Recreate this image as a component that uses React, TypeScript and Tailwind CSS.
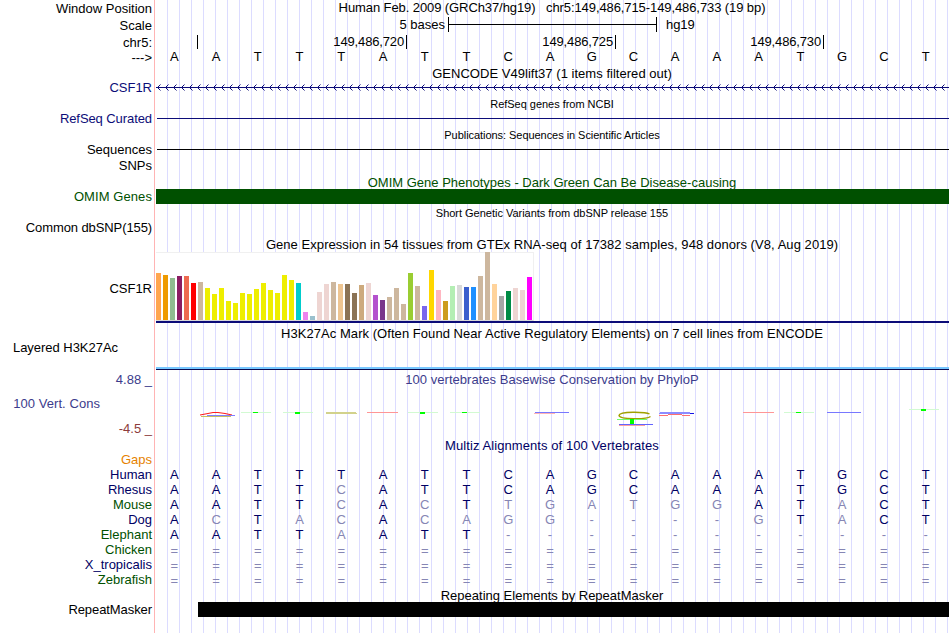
import type { ReactNode } from 'react';

const SEQ = 'AATTTATTCAGCAAATGCT';

// upper case = matches human, lower case = mismatch (drawn faded)
const ALIGNMENTS = [
  { name: 'Human', seq: 'AATTTATTCAGCAAATGCT', green: false },
  { name: 'Rhesus', seq: 'AATTcATTCAGCAAATGCT', green: false },
  { name: 'Mouse', seq: 'AATTcAcTtgatggATaCT', green: true },
  { name: 'Dog', seq: 'AcTacAcagg----gTaCT', green: false },
  { name: 'Elephant', seq: 'AATTaATT-----------', green: true },
  { name: 'Chicken', seq: '===================', green: true },
  { name: 'X_tropicalis', seq: '===================', green: false },
  { name: 'Zebrafish', seq: '===================', green: true },
];

const TISSUES: [number, string][] = [
  [47, '#ffa54f'], [45, '#ee9a00'], [42, '#8fbc8f'], [44, '#8b1c62'], [44, '#ee6a50'], [37, '#ff0000'],
  [38, '#cdb79e'], [32, '#eeee00'], [26, '#eeee00'], [32, '#eeee00'], [19, '#eeee00'], [17, '#eeee00'],
  [27, '#eeee00'], [26, '#eeee00'], [31, '#eeee00'], [37, '#eeee00'], [30, '#eeee00'], [27, '#eeee00'],
  [45, '#eeee00'], [40, '#eeee00'], [37, '#00cdcd'], [8, '#ee82ee'], [4, '#9ac0cd'], [28, '#eed5d2'],
  [36, '#eed5d2'], [38, '#cdb79e'], [36, '#eec591'], [36, '#8b7355'], [27, '#8b7355'], [35, '#cdaa7d'],
  [37, '#eed5d2'], [25, '#b452cd'], [20, '#7a378b'], [23, '#cdb79e'], [32, '#cdb79e'], [16, '#cdb79e'],
  [47, '#9acd32'], [34, '#cdb79e'], [14, '#7a67ee'], [50, '#ffd700'], [30, '#ffb6c1'], [19, '#cd9b1d'],
  [34, '#b4eeb4'], [35, '#d9d9d9'], [33, '#3a5fcd'], [33, '#1e90ff'], [44, '#cdb79e'], [68, '#cdb79e'],
  [36, '#ffd39b'], [24, '#a6a6a6'], [29, '#008b45'], [32, '#eed5d2'], [30, '#eed5d2'], [43, '#ff00ff'],
];

const ARROWS = Array.from({ length: 99 }, (_, i) => `M${4.5 + i * 8} 0.5l-3 3l3 3`).join('');

type RowProps = {
  height: string;
  label?: string;
  labelClass?: string;
  children?: ReactNode;
};

function Row({ height, label, labelClass = '', children }: RowProps) {
  return (
    <div className={`flex shrink-0 ${height}`}>
      <div className={`w-[152px] shrink-0 text-right whitespace-pre ${labelClass}`}>{label}</div>
      <div className="w-[4px] shrink-0" />
      <div className="w-[793px] shrink-0">{children}</div>
    </div>
  );
}

function Title({ children, className = '' }: { children: ReactNode; className?: string }) {
  return <div className={`pr-px text-center whitespace-pre ${className}`}>{children}</div>;
}

function Bases({ seq, className = '' }: { seq: string; className?: string }) {
  return (
    <div className={`-ml-[2.5px] grid w-[793px] grid-cols-19 text-center ${className}`}>
      {seq.split('').map((c, i) => (
        <span key={i} className={/[A-Z]/.test(c) ? '' : 'text-[#8686b4]'}>
          {c.toUpperCase()}
        </span>
      ))}
    </div>
  );
}

function Tick({ label, width }: { label?: string; width: string }) {
  return (
    <div className={`flex h-[14px] shrink-0 justify-end border-r border-black ${width}`}>
      {label && <span className="mr-[2px] leading-[14px] tracking-[-0.15px]">{label}</span>}
    </div>
  );
}

function Expression() {
  return (
    <div className="h-[71px]">
      <div className="flex h-[69px] w-[378px] items-end gap-[2px] border-t border-r border-b border-t-[#f0f0f0] border-r-[#f0f0f0] border-b-[#d8d8d8] bg-white">
        {TISSUES.map(([h, color], i) => (
          <div key={i} className="-mt-px w-[5px] shrink-0" style={{ height: h, backgroundColor: color }} />
        ))}
      </div>
      <div className="h-[2px] bg-[#0c0c78]" />
    </div>
  );
}

function Conservation() {
  return (
    <svg width="793" height="20" viewBox="156 408 793 20" fill="none">
      <path d="M200 415L208 413.5L213 412.5H218L225 413.5L232 415" stroke="#ff2020" strokeWidth="1.2" />
      <path d="M207 415.5H235" stroke="#8080ff" />
      <path d="M201 416.5H231" stroke="#c8c060" />
      <path d="M241 412.5H271M283 412.5H313M408 412.5H438M450 412.5H480M784 412.5H814M909 409.5H939" stroke="#d2fad2" />
      <path d="M253 412.5H258M462 412.5H467M796 412.5H801" stroke="#00ff00" />
      <path d="M295 412H300V414H295ZM420 412H425V414H420ZM921 409H926V411H921Z" fill="#00ff00" />
      <path d="M326 412.5H356M326 413.5H357" stroke="#d2d28c" />
      <path d="M367 412.5H398M743 412.5H774" stroke="#ff9696" />
      <path d="M535 412.5H569M827 412.5H861" stroke="#7878ff" />
      <path d="M534 413.5H555" stroke="#ffb4b4" />
      <path d="M649.5 414C646 411.8 619.5 411 619 415.3C619 419.8 647 419.5 650.5 416.5" stroke="#a0a000" strokeWidth="1.4" />
      <path d="M617 419.5H647" stroke="#70ff70" />
      <path d="M630 419H634V424H630Z" fill="#00ff00" />
      <path d="M619 424.5H653" stroke="#6464ff" />
      <path d="M619 425.5H645" stroke="#ffa0a0" />
      <path d="M660 412.5H690M659 413.5H694" stroke="#8c8cff" />
      <path d="M690 413.5H694" stroke="#1414e6" />
      <path d="M659 415.5H668M682 415.5H690M668 414.5H682" stroke="#ff7070" />
    </svg>
  );
}

export default function App() {
  return (
    <div className="flex h-[633px] w-[950px] overflow-hidden bg-white font-['Liberation_Sans',sans-serif] text-[13px] leading-[15px] text-black">
      <div className="relative flex w-[949px] shrink-0 flex-col">
        <div className="absolute inset-y-0 left-[154px] w-px bg-[#ffb4b4]" />
        <div className="absolute inset-y-0 left-[156px] w-[793px] bg-[repeating-linear-gradient(to_right,transparent_0,transparent_11px,#dcdcff_11px,#dcdcff_12px)]" />
        <div className="relative flex flex-col">
          <Row height="h-[16px]" label="Window Position" labelClass="pt-px">
            <Title className="tracking-[-0.09px]">
              Human Feb. 2009 (GRCh37/hg19)   chr5:149,486,715-149,486,733 (19 bp)
            </Title>
          </Row>
          <Row height="h-[18px]" label="Scale" labelClass="pt-[2px]">
            <div className="flex items-center pt-px">
              <span className="w-[292px] pr-[3px] text-right">5 bases</span>
              <div className="flex h-[15px] w-[209px] items-center border-x border-black">
                <div className="h-px w-full bg-black" />
              </div>
              <span className="pl-[9px] tracking-[-0.1px]">hg19</span>
            </div>
          </Row>
          <Row height="h-[16px]" label="chr5:" labelClass="pt-px">
            <div className="flex pt-px">
              <Tick width="w-[42px]" />
              <Tick width="w-[209px]" label="149,486,720" />
              <Tick width="w-[209px]" label="149,486,725" />
              <Tick width="w-[208px]" label="149,486,730" />
            </div>
          </Row>
          <Row height="h-[16px]" label="--->">
            <Bases seq={SEQ} className="-mt-px" />
          </Row>
          <Row height="h-[14px]">
            <Title className="tracking-[0.03px]">GENCODE V49lift37 (1 items filtered out)</Title>
          </Row>
          <Row height="h-[17px]" label="CSF1R" labelClass="text-[#0c0c78]">
            <svg width="793" height="7" className="mt-[4px] block" fill="none">
              <path d="M0 3.5H793" stroke="#0c0c78" />
              <path d={ARROWS} stroke="#0c0c78" />
            </svg>
          </Row>
          <Row height="h-[14px]">
            <Title className="text-[11px] tracking-[-0.03px]">RefSeq genes from NCBI</Title>
          </Row>
          <Row height="h-[17px]" label="RefSeq Curated" labelClass="tracking-[-0.08px] text-[#0c0c78]">
            <div className="mt-[7px] ml-px h-px bg-[#0c0c78]" />
          </Row>
          <Row height="h-[14px]">
            <Title className="text-[11px] tracking-[-0.05px]">Publications: Sequences in Scientific Articles</Title>
          </Row>
          <Row height="h-[16px]" label="Sequences">
            <div className="mt-[7px] ml-px h-px bg-black" />
          </Row>
          <Row height="h-[17px]" label="SNPs" />
          <Row height="h-[14px]">
            <Title className="text-[#005000]">OMIM Gene Phenotypes - Dark Green Can Be Disease-causing</Title>
          </Row>
          <Row height="h-[17px]" label="OMIM Genes" labelClass="text-[#005000] tracking-[0.08px]">
            <div className="h-[15px] bg-[#005000]" />
          </Row>
          <Row height="h-[14px]">
            <Title className="text-[11px] tracking-[-0.02px]">Short Genetic Variants from dbSNP release 155</Title>
          </Row>
          <Row height="h-[17px]" label="Common dbSNP(155)" labelClass="tracking-[-0.1px]" />
          <Row height="h-[15px]">
            <Title className="tracking-[0.055px]">
              Gene Expression in 54 tissues from GTEx RNA-seq of 17382 samples, 948 donors (V8, Aug 2019)
            </Title>
          </Row>
          <Row height="h-[74px]" label="CSF1R" labelClass="pt-[29px]">
            <Expression />
          </Row>
          <Row height="h-[14px]">
            <Title className="tracking-[0.05px]">
              H3K27Ac Mark (Often Found Near Active Regulatory Elements) on 7 cell lines from ENCODE
            </Title>
          </Row>
          <Row height="h-[32px]" label="Layered H3K27Ac" labelClass="pr-[34px] tracking-[-0.03px]">
            <div className="mt-[27px] h-[2px] bg-[#78c8ff]" />
            <div className="h-px bg-[#0c0c50]" />
          </Row>
          <Row height="h-[24px]" label="4.88 _" labelClass="text-[#3c3c8c]">
            <Title className="tracking-[0.03px] text-[#3c3c8c]">100 vertebrates Basewise Conservation by PhyloP</Title>
          </Row>
          <Row height="h-[25px]" label="100 Vert. Cons" labelClass="pr-[52px] tracking-[0.05px] text-[#3c3c8c]">
            <div className="pt-[12px]">
              <Conservation />
            </div>
          </Row>
          <Row height="h-[17px]" label="-4.5 _" labelClass="text-[#8c3c3c]" />
          <Row height="h-[14px]">
            <Title className="tracking-[0.08px] text-[#000064]">Multiz Alignments of 100 Vertebrates</Title>
          </Row>
          <Row height="h-[15px]" label="Gaps" labelClass="text-[#e68200]" />
          {ALIGNMENTS.map((a) => (
            <Row
              key={a.name}
              height="h-[15px]"
              label={a.name}
              labelClass={a.green ? 'text-[#005000]' : 'text-[#000064]'}
            >
              <Bases seq={a.seq} className={a.seq[0] === '=' ? 'pt-px' : 'text-[#000064]'} />
            </Row>
          ))}
          <Row height="h-[15px]">
            <Title className="pt-px">Repeating Elements by RepeatMasker</Title>
          </Row>
          <Row height="h-[15px]" label="RepeatMasker" labelClass="tracking-[-0.08px]">
            <div className="ml-[42px] h-[15px] bg-black" />
          </Row>
        </div>
      </div>
    </div>
  );
}
